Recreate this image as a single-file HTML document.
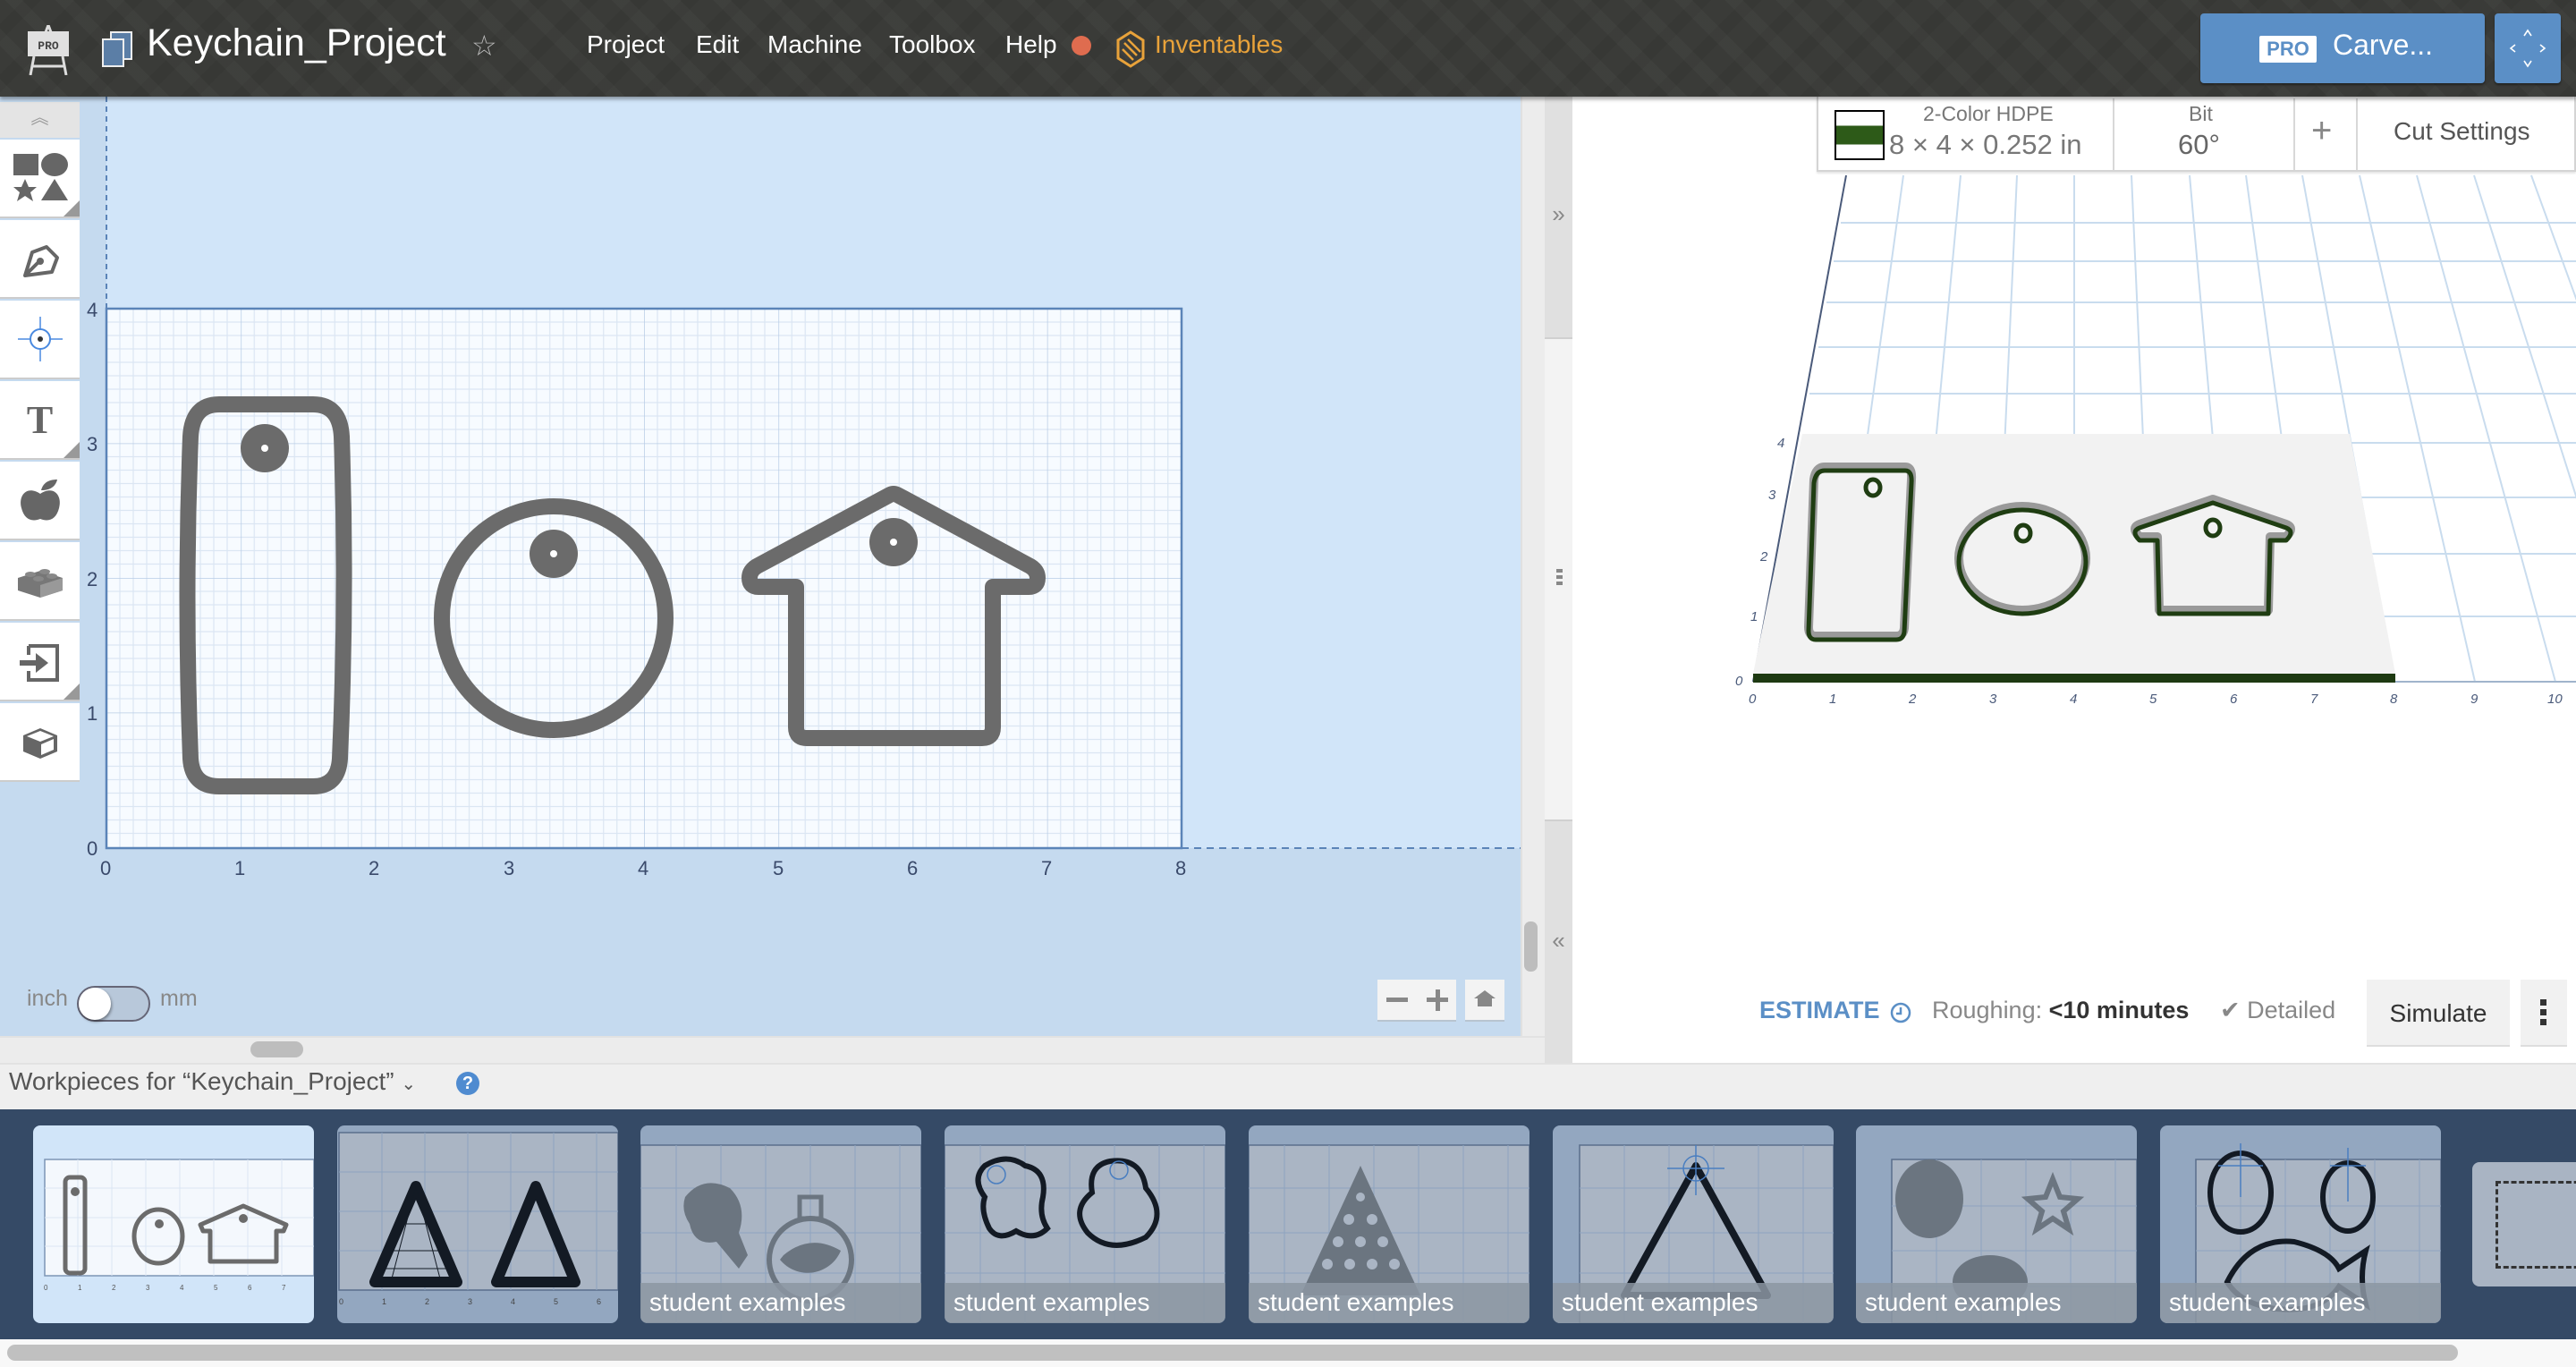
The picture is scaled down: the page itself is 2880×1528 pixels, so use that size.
<!DOCTYPE html>
<html><head><meta charset="utf-8">
<style>
*{margin:0;padding:0;box-sizing:border-box}
body{width:2880px;height:1528px;overflow:hidden;position:relative;font-family:"Liberation Sans",sans-serif;background:#fff}
.a{position:absolute}
.hdr{left:0;top:0;width:2880px;height:108px;background:#3a3b38;
background-image:repeating-linear-gradient(45deg,rgba(255,255,255,0.025) 0 14px,transparent 14px 40px),repeating-linear-gradient(-45deg,rgba(0,0,0,0.06) 0 14px,transparent 14px 40px);
box-shadow:0 3px 4px rgba(0,0,0,.35);z-index:5}
.menu{color:#fff;font-size:28px;top:34px}
.tb{left:0;width:89px;background:#fff;border-bottom:2px solid #ccc}
.tri{position:absolute;right:0;bottom:0;width:0;height:0;border-left:18px solid transparent;border-bottom:18px solid #999}
.card{top:1258px;width:314px;height:221px;border-radius:8px;overflow:hidden}
.cap{position:absolute;left:0;bottom:0;width:100%;height:45px;background:rgba(140,150,162,.85);color:#fff;font-size:28px;padding:6px 0 0 10px}
</style></head><body>

<div class="a hdr">
  <svg class="a" style="left:28px;top:28px" width="52" height="56" viewBox="0 0 52 56">
    <path d="M26 0 L23 8 M26 0 L29 8" stroke="#ddd" stroke-width="3"/>
    <rect x="3" y="7" width="46" height="28" fill="#e0e0e0"/>
    <text x="26" y="27" font-size="13" font-family="Liberation Mono" font-weight="bold" fill="#444" text-anchor="middle">PRO</text>
    <path d="M10 35 L6 56 M42 35 L46 56 M8 46 L44 46" stroke="#ddd" stroke-width="3"/>
  </svg>
  <svg class="a" style="left:113px;top:35px" width="36" height="40" viewBox="0 0 36 40">
    <rect x="11" y="1" width="23" height="30" fill="#5b7ea6" stroke="#eee" stroke-width="2"/>
    <rect x="2" y="9" width="23" height="30" fill="#5b7ea6" stroke="#eee" stroke-width="2"/>
  </svg>
  <div class="a" style="left:164px;top:24px;color:#fff;font-size:43px">Keychain_Project</div>
  <div class="a" style="left:527px;top:32px;color:#bbb;font-size:32px">☆</div>
  <div class="a menu" style="left:656px">Project</div>
  <div class="a menu" style="left:778px">Edit</div>
  <div class="a menu" style="left:858px">Machine</div>
  <div class="a menu" style="left:994px">Toolbox</div>
  <div class="a menu" style="left:1124px">Help</div>
  <div class="a" style="left:1198px;top:40px;width:22px;height:22px;border-radius:50%;background:#df6c4f"></div>
  <svg class="a" style="left:1247px;top:34px" width="34" height="42" viewBox="0 0 34 42">
    <path d="M17 2 L31 11 L31 31 L17 40 L3 31 L3 11 Z" fill="none" stroke="#e8a23a" stroke-width="3"/>
    <path d="M10 14 L24 28 M8 21 L20 33 M14 10 L28 24" stroke="#e8a23a" stroke-width="2.5"/>
  </svg>
  <div class="a menu" style="left:1291px;color:#e8a23a">Inventables</div>
  <div class="a" style="left:2460px;top:15px;width:318px;height:78px;background:#5b8fc6;border-radius:4px;box-shadow:0 2px 2px rgba(0,0,0,.4)"></div>
  <div class="a" style="left:2526px;top:40px;width:64px;height:30px;background:#fff;color:#5b8fc6;font-weight:bold;font-size:22px;text-align:center;line-height:30px;border-radius:2px">PRO</div>
  <div class="a" style="left:2608px;top:32px;color:#fff;font-size:32px">Carve...</div>
  <div class="a" style="left:2789px;top:15px;width:74px;height:78px;background:#5b8fc6;border-radius:4px;box-shadow:0 2px 2px rgba(0,0,0,.4)"></div>
  <svg class="a" style="left:2805px;top:32px" width="42" height="44" viewBox="0 0 42 44" fill="none" stroke="#fff" stroke-width="1.6">
    <path d="M17 8 L21 2 L25 8 M17 36 L21 42 L25 36 M7 18 L2 22 L7 26 M35 18 L40 22 L35 26"/>
  </svg>
</div>

<div class="a" style="left:0;top:108px;width:1700px;height:1050px;background:#c5daef"></div>
<div class="a" style="left:119px;top:108px;width:1581px;height:840px;background:#d1e5f9"></div>
<svg class="a" style="left:0;top:108px" width="1700" height="1050">
  <defs>
    <pattern id="g" x="119" y="237" width="150.25" height="150.5" patternUnits="userSpaceOnUse">
      <rect width="150.25" height="150.5" fill="#f7fbff"/>
      <g stroke="#dbe6f3" stroke-width="1.2">
        <path d="M15 0V151M30 0V151M45 0V151M60 0V151M75 0V151M90 0V151M105 0V151M120 0V151M135 0V151"/>
        <path d="M0 15H151M0 30H151M0 45H151M0 60H151M0 75H151M0 90H151M0 105H151M0 120H151M0 135H151"/>
      </g>
      <path d="M0 0V151M0 0H151" stroke="#b8cde6" stroke-width="1.5"/>
    </pattern>
  </defs>
  <rect x="119" y="237" width="1202" height="603" fill="url(#g)" stroke="#5b84b8" stroke-width="2.5"/>
  <path d="M119 0V237" stroke="#5b84b8" stroke-width="2" stroke-dasharray="6 5"/>
  <path d="M1321 840H1700" stroke="#5b84b8" stroke-width="2" stroke-dasharray="8 6"/>
  <g font-size="22" fill="#3a4a6b" font-family="Liberation Sans">
    <text x="112" y="870">0</text><text x="262" y="870">1</text><text x="412" y="870">2</text><text x="563" y="870">3</text><text x="713" y="870">4</text><text x="864" y="870">5</text><text x="1014" y="870">6</text><text x="1164" y="870">7</text><text x="1314" y="870">8</text>
    <text x="97" y="848">0</text><text x="97" y="697">1</text><text x="97" y="547">2</text><text x="97" y="396">3</text><text x="97" y="246">4</text>
  </g>
  <g fill="none" stroke="#6b6b6b" stroke-width="18" stroke-linejoin="round">
    <path d="M245 344 L350 344 Q380 344 382 380 Q388 560 380 740 Q378 771 350 771 L245 771 Q215 771 213 740 Q206 560 213 380 Q215 344 245 344 Z"/>
    <circle cx="619" cy="583" r="125"/>
    <path d="M890 548 L848 548 Q838 548 838 538 Q838 530 846 525 L995 445 Q999 443 1003 445 L1152 525 Q1160 530 1160 538 Q1160 548 1150 548 L1110 548 L1110 705 Q1110 717 1098 717 L902 717 Q890 717 890 705 Z"/>
  </g>
  <g fill="#6b6b6b"><circle cx="296" cy="393" r="27"/><circle cx="619" cy="511" r="27"/><circle cx="999" cy="498" r="27"/></g>
  <g fill="#fff"><circle cx="296" cy="393" r="4"/><circle cx="619" cy="511" r="4"/><circle cx="999" cy="498" r="4"/></g>
</svg>
<div class="a" style="left:0;top:114px;width:89px;height:40px;background:#e4e4e4;color:#999;text-align:center;font-size:20px;line-height:36px">︽</div>
<div class="a tb" style="top:156px;height:88px"><svg width="89" height="88"><rect x="15" y="16" width="28" height="24" fill="#666"/><ellipse cx="61" cy="28" rx="15" ry="13" fill="#666"/><path d="M28 44l4 9h9l-7 6 3 10-9-6-9 6 3-10-7-6h9z" fill="#666"/><path d="M61 44l15 24h-30z" fill="#666"/></svg><div class="tri"></div></div>
<div class="a tb" style="top:246px;height:88px"><svg width="89" height="88"><path d="M28 62 L36 36 L52 30 L64 42 L58 58 Z M28 62 L44 46" fill="none" stroke="#666" stroke-width="4" stroke-linejoin="round"/><circle cx="45" cy="46" r="4" fill="#666"/></svg></div>
<div class="a tb" style="top:336px;height:88px"><svg width="89" height="88"><circle cx="45" cy="43" r="11" fill="none" stroke="#4a8ae0" stroke-width="2"/><circle cx="45" cy="43" r="3" fill="#333"/><path d="M20 43H34M56 43H70M45 18V32M45 54V68" stroke="#4a8ae0" stroke-width="1.5"/></svg></div>
<div class="a tb" style="top:426px;height:88px"><div style="text-align:center;font-family:'Liberation Serif';font-weight:bold;font-size:44px;color:#666;line-height:88px">T</div><div class="tri"></div></div>
<div class="a tb" style="top:516px;height:88px"><svg width="89" height="88"><path d="M45 36 C30 26 20 38 24 52 C27 64 35 68 45 64 C55 68 63 64 66 52 C70 38 60 26 45 36Z" fill="#666"/><path d="M46 32 C48 24 54 20 64 20 C62 28 56 32 46 32Z" fill="#666"/></svg></div>
<div class="a tb" style="top:606px;height:88px"><svg width="89" height="88"><path d="M20 40 L45 32 L70 40 L70 54 L45 62 L20 54 Z" fill="#777"/><path d="M45 48 L70 40 L70 54 L45 62Z" fill="#999"/><ellipse cx="34" cy="36" rx="6" ry="3" fill="#888"/><ellipse cx="50" cy="33" rx="6" ry="3" fill="#888"/><ellipse cx="43" cy="41" rx="6" ry="3" fill="#888"/><ellipse cx="58" cy="38" rx="6" ry="3" fill="#888"/></svg></div>
<div class="a tb" style="top:696px;height:88px"><svg width="89" height="88"><path d="M32 26 H64 V64 H32 V54 M32 36 V26" fill="none" stroke="#666" stroke-width="4"/><path d="M22 42 H40 V34 L54 45 L40 56 V48 H22Z" fill="#666"/></svg><div class="tri"></div></div>
<div class="a tb" style="top:786px;height:88px"><svg width="89" height="88"><path d="M26 36 L45 28 L64 36 L64 54 L45 62 L26 54Z" fill="#666"/><path d="M30 37 L45 31 L60 37 L45 43Z M46 46 L60 40 L60 52 L46 58Z" fill="#fff"/></svg></div>

<div class="a" style="left:30px;top:1102px;color:#888;font-size:25px">inch</div>
<div class="a" style="left:86px;top:1102px;width:82px;height:40px;border-radius:20px;background:#b8c8da;border:2px solid #667"></div>
<div class="a" style="left:88px;top:1104px;width:36px;height:36px;border-radius:50%;background:#fff;box-shadow:1px 2px 3px rgba(0,0,0,.4)"></div>
<div class="a" style="left:179px;top:1102px;color:#888;font-size:25px">mm</div>
<div class="a" style="left:1540px;top:1095px;width:88px;height:47px;background:#f3f3f3;border-bottom:2px solid #b8c4d0"></div>
<div class="a" style="left:1550px;top:1115px;width:24px;height:5px;background:#888"></div>
<div class="a" style="left:1595px;top:1115px;width:24px;height:5px;background:#888"></div>
<div class="a" style="left:1605px;top:1106px;width:5px;height:24px;background:#888"></div>
<div class="a" style="left:1638px;top:1095px;width:44px;height:47px;background:#f3f3f3;border-bottom:2px solid #b8c4d0"></div>
<svg class="a" style="left:1646px;top:1105px" width="28" height="22"><path d="M2 11 L14 2 L26 11 Z M6 11 V20 H22 V11" fill="#888"/></svg>

<div class="a" style="left:1700px;top:108px;width:27px;height:1050px;background:#ececec;border-left:2px solid #e0e0e0"></div>
<div class="a" style="left:1704px;top:1030px;width:15px;height:56px;border-radius:7px;background:#bdbdbd"></div>
<div class="a" style="left:1727px;top:108px;width:31px;height:269px;background:#e0e0e0;color:#888;font-size:26px;text-align:center;padding-top:116px">»</div>
<div class="a" style="left:1727px;top:377px;width:31px;height:541px;background:#f3f3f3;border-top:2px solid #d0d0d0;border-bottom:2px solid #d0d0d0"></div>
<div class="a" style="left:1740px;top:636px;width:7px;height:20px;background:repeating-linear-gradient(#888 0 4px,transparent 4px 7px)"></div>
<div class="a" style="left:1727px;top:918px;width:31px;height:270px;background:#e0e0e0;color:#888;font-size:26px;text-align:center;padding-top:118px">«</div>
<div class="a" style="left:0;top:1158px;width:1727px;height:30px;background:#ececec;border-top:2px solid #e2e2e2"></div>
<div class="a" style="left:280px;top:1164px;width:59px;height:18px;border-radius:9px;background:#bdbdbd"></div>

<svg class="a" style="left:1758px;top:108px" width="1122" height="1080">
  <g transform="translate(-1758,-108)">
    <g stroke="#c9dcee" stroke-width="2" fill="none">
      <path d="M2058 249H2880M2050 292H2880M2042 338H2880M2033 388H2880M2023 440H2880M2013 495H2880M2003 556H2880M1991 619H2880M1979 689H2880"/>
      <path d="M2128 196L2050 762M2192 196L2139 762M2255 196L2229 762M2319 196L2319 762M2383 196L2408 762M2448 196L2498 762M2511 196L2588 762M2574 196L2677 762M2638 196L2767 762M2702 196L2857 762M2766 196L2946 762M2830 196L3036 762"/>
    </g>
    <path d="M2064 196L1960 762" stroke="#4a5a7a" stroke-width="2"/>
    <path d="M1960 762H2880" stroke="#a0b4cc" stroke-width="2"/>
    <path d="M2015 485H2627L2678 753H1960Z" fill="#f2f2f2"/>
    <rect x="1960" y="753" width="718" height="10" fill="#1e3a12"/>
    <g fill="none" stroke-linejoin="round">
      <g stroke="#9a9a9a" stroke-width="10" transform="translate(0,-4)">
        <path d="M2040 526H2130Q2138 526 2137 540L2129 706Q2128 715 2120 715H2030Q2022 715 2022 705L2028 540Q2030 526 2040 526Z"/>
        <ellipse cx="2261" cy="628" rx="71" ry="58"/>
        <path d="M2412 604H2392Q2382 594 2392 590L2474 562L2556 590Q2566 594 2556 604H2538L2536 686H2414Z"/>
      </g>
      <g stroke="#1f3d12" stroke-width="5">
        <path d="M2040 526H2130Q2138 526 2137 540L2129 706Q2128 715 2120 715H2030Q2022 715 2022 705L2028 540Q2030 526 2040 526Z"/>
        <ellipse cx="2261" cy="628" rx="71" ry="58"/>
        <path d="M2412 604H2392Q2382 594 2392 590L2474 562L2556 590Q2566 594 2556 604H2538L2536 686H2414Z"/>
        <ellipse cx="2094" cy="545" rx="8" ry="9"/><ellipse cx="2262" cy="596" rx="8" ry="9"/><ellipse cx="2474" cy="590" rx="8" ry="9"/>
      </g>
    </g>
    <g font-size="15" fill="#4a5a7a" font-style="italic">
      <text x="1955" y="786">0</text><text x="2045" y="786">1</text><text x="2134" y="786">2</text><text x="2224" y="786">3</text><text x="2314" y="786">4</text><text x="2403" y="786">5</text><text x="2493" y="786">6</text><text x="2583" y="786">7</text><text x="2672" y="786">8</text><text x="2762" y="786">9</text><text x="2848" y="786">10</text>
      <text x="1940" y="766">0</text><text x="1957" y="694">1</text><text x="1968" y="627">2</text><text x="1977" y="558">3</text><text x="1987" y="500">4</text>
    </g>
  </g>
</svg>
<div class="a" style="left:2031px;top:108px;width:849px;height:84px;background:#fff;border:2px solid #d4d4d4;border-top:none;box-shadow:0 2px 2px rgba(0,0,0,.1)"></div>
<div class="a" style="left:2051px;top:123px;width:56px;height:56px;border:2px solid #000;background:linear-gradient(#fff 0 30%,#2d5a18 30% 70%,#fff 70%)"></div>
<div class="a" style="left:2150px;top:114px;color:#777;font-size:23px">2-Color HDPE</div>
<div class="a" style="left:2112px;top:144px;color:#777;font-size:31px">8 × 4 × 0.252 in</div>
<div class="a" style="left:2362px;top:110px;width:2px;height:80px;background:#d8d8d8"></div>
<div class="a" style="left:2447px;top:114px;color:#777;font-size:23px">Bit</div>
<div class="a" style="left:2435px;top:144px;color:#666;font-size:31px">60°</div>
<div class="a" style="left:2564px;top:110px;width:2px;height:80px;background:#d8d8d8"></div>
<div class="a" style="left:2584px;top:124px;color:#888;font-size:40px">+</div>
<div class="a" style="left:2634px;top:110px;width:2px;height:80px;background:#d8d8d8"></div>
<div class="a" style="left:2676px;top:131px;color:#555;font-size:28px">Cut Settings</div>

<div class="a" style="left:1967px;top:1114px;color:#5b8fc6;font-size:27px;font-weight:bold">ESTIMATE</div>
<svg class="a" style="left:2112px;top:1119px" width="26" height="26"><circle cx="13" cy="13" r="10" fill="none" stroke="#5b8fc6" stroke-width="2.5"/><path d="M13 7V14H8" fill="none" stroke="#5b8fc6" stroke-width="2.5"/></svg>
<div class="a" style="left:2160px;top:1114px;color:#888;font-size:27px">Roughing: <b style="color:#333">&lt;10 minutes</b></div>
<div class="a" style="left:2482px;top:1114px;color:#888;font-size:27px">✔ Detailed</div>
<div class="a" style="left:2646px;top:1095px;width:160px;height:75px;background:#f1f1f1;border-bottom:2px solid #ddd;color:#333;font-size:28px;text-align:center;line-height:75px">Simulate</div>
<div class="a" style="left:2818px;top:1095px;width:52px;height:75px;background:#f1f1f1;border-bottom:2px solid #ddd"></div>
<div class="a" style="left:2840px;top:1117px;width:7px;height:30px;background:repeating-linear-gradient(#333 0 7px,transparent 7px 11px)"></div>

<div class="a" style="left:0;top:1188px;width:2880px;height:52px;background:#efefef;border-top:2px solid #e2e2e2"></div>
<div class="a" style="left:10px;top:1193px;color:#555;font-size:28px">Workpieces for “Keychain_Project” <span style="font-size:20px">⌄</span></div>
<div class="a" style="left:510px;top:1198px;width:26px;height:26px;border-radius:50%;background:#4f8bd0;color:#fff;font-weight:bold;font-size:20px;text-align:center;line-height:26px">?</div>
<div class="a" style="left:0;top:1240px;width:2880px;height:257px;background:#354a66"></div>

<div class="a card" style="left:37px;background:#d1e5f9">
<svg width="314" height="221"><rect x="13" y="38" width="301" height="130" fill="#f4f8fd" stroke="#7d95b5" stroke-width="1.5"/>
<g stroke="#dbe6f3"><path d="M50 38V168M88 38V168M126 38V168M164 38V168M202 38V168M240 38V168M278 38V168M13 70H314M13 103H314M13 135H314"/></g>
<g fill="none" stroke="#6b6b6b" stroke-width="5" stroke-linejoin="round"><rect x="36" y="58" width="22" height="107" rx="5"/><ellipse cx="140" cy="124" rx="27" ry="30"/><path d="M198 118H190L187 111L235 90L283 111L280 118H272V152H198V118Z"/></g>
<g fill="#6b6b6b"><circle cx="47" cy="74" r="5"/><circle cx="141" cy="110" r="5"/><circle cx="235" cy="104" r="5"/></g>
<g font-size="8" fill="#555"><text x="12" y="184">0</text><text x="50" y="184">1</text><text x="88" y="184">2</text><text x="126" y="184">3</text><text x="164" y="184">4</text><text x="202" y="184">5</text><text x="240" y="184">6</text><text x="278" y="184">7</text></g></svg></div>

<div class="a card" style="left:377px;background:#93a7c0">
<svg width="314" height="221"><rect x="2" y="8" width="312" height="176" fill="#aab5c4" stroke="#5a6f8c" stroke-width="1.5"/>
<g stroke="#8ea4bf"><path d="M50 8V184M98 8V184M146 8V184M194 8V184M242 8V184M290 8V184M2 52H314M2 96H314M2 140H314"/></g>
<path d="M88 68L42 175H134Z" fill="#aab5c4" stroke="#131a24" stroke-width="12" stroke-linejoin="round"/>
<g stroke="#131a24" stroke-width="1"><path d="M88 68L60 175M88 68L116 175M55 140H120M65 110H110M48 160H128"/></g>
<path d="M222 68L178 175H266Z" fill="none" stroke="#131a24" stroke-width="12" stroke-linejoin="round"/>
<g font-size="9" fill="#444"><text x="2" y="200">0</text><text x="50" y="200">1</text><text x="98" y="200">2</text><text x="146" y="200">3</text><text x="194" y="200">4</text><text x="242" y="200">5</text><text x="290" y="200">6</text></g></svg></div>

<div class="a card" style="left:716px;background:#93a7c0">
<svg width="314" height="221"><rect x="0" y="22" width="314" height="199" fill="#aab5c4" stroke="#5a6f8c" stroke-width="1.5"/>
<g stroke="#8ea4bf"><path d="M40 22V221M90 22V221M140 22V221M190 22V221M240 22V221M290 22V221M0 70H314M0 120H314M0 165H314"/></g>
<path d="M50 80Q70 55 100 70Q120 90 110 120L120 145L110 160L85 130Q60 135 55 110Q45 95 50 80Z" fill="#6b7580"/>
<circle cx="190" cy="150" r="46" fill="none" stroke="#6b7580" stroke-width="6"/>
<path d="M160 145Q190 120 224 140A40 40 0 0 1 156 150Z" fill="#6b7580"/>
<path d="M178 80H202V104H178Z" fill="none" stroke="#6b7580" stroke-width="5"/></svg>
<div class="cap">student examples</div></div>

<div class="a card" style="left:1056px;background:#93a7c0">
<svg width="314" height="221"><rect x="0" y="22" width="314" height="199" fill="#aab5c4" stroke="#5a6f8c" stroke-width="1.5"/>
<g stroke="#8ea4bf"><path d="M40 22V221M90 22V221M140 22V221M190 22V221M240 22V221M290 22V221M0 70H314M0 120H314M0 165H314"/></g>
<path d="M45 45Q70 30 90 45Q115 50 110 80Q105 100 115 115Q100 130 80 118Q60 130 50 115Q40 95 45 80Q30 60 45 45Z" fill="none" stroke="#131a24" stroke-width="6"/>
<path d="M185 40Q220 35 225 70Q250 100 225 125Q185 145 160 120Q140 95 165 75Q160 45 185 40Z" fill="none" stroke="#131a24" stroke-width="6"/>
<circle cx="58" cy="55" r="10" fill="none" stroke="#4a7ec0" stroke-width="1.5"/><circle cx="195" cy="50" r="10" fill="none" stroke="#4a7ec0" stroke-width="1.5"/></svg>
<div class="cap">student examples</div></div>

<div class="a card" style="left:1396px;background:#93a7c0">
<svg width="314" height="221"><rect x="0" y="22" width="314" height="199" fill="#aab5c4" stroke="#5a6f8c" stroke-width="1.5"/>
<g stroke="#8ea4bf"><path d="M40 22V221M90 22V221M140 22V221M190 22V221M240 22V221M290 22V221M0 70H314M0 120H314M0 165H314"/></g>
<path d="M125 45L58 190H192Z" fill="#6b7580"/>
<g fill="#aab5c4"><circle cx="125" cy="80" r="5"/><circle cx="112" cy="105" r="6"/><circle cx="138" cy="105" r="6"/><circle cx="100" cy="130" r="6"/><circle cx="125" cy="130" r="6"/><circle cx="150" cy="130" r="6"/><circle cx="88" cy="155" r="6"/><circle cx="113" cy="155" r="6"/><circle cx="138" cy="155" r="6"/><circle cx="163" cy="155" r="6"/></g></svg>
<div class="cap">student examples</div></div>

<div class="a card" style="left:1736px;background:#93a7c0">
<svg width="314" height="221"><rect x="30" y="22" width="284" height="199" fill="#aab5c4" stroke="#5a6f8c" stroke-width="1.5"/>
<g stroke="#8ea4bf"><path d="M80 22V221M130 22V221M180 22V221M230 22V221M280 22V221M30 70H314M30 120H314M30 165H314"/></g>
<path d="M160 45L80 190H240Z" fill="none" stroke="#131a24" stroke-width="8" stroke-linejoin="round"/>
<circle cx="160" cy="48" r="14" fill="none" stroke="#4a7ec0" stroke-width="1.5"/><path d="M160 22V78M128 48H192" stroke="#4a7ec0" stroke-width="1.5"/></svg>
<div class="cap">student examples</div></div>

<div class="a card" style="left:2075px;background:#93a7c0">
<svg width="314" height="221"><rect x="40" y="38" width="274" height="183" fill="#aab5c4" stroke="#5a6f8c" stroke-width="1.5"/>
<g stroke="#8ea4bf"><path d="M90 38V221M140 38V221M190 38V221M240 38V221M290 38V221M40 90H314M40 140H314M40 180H314"/></g>
<ellipse cx="82" cy="82" rx="38" ry="44" fill="#6b7580"/>
<path d="M220 60L228 80L248 82L232 96L238 116L220 104L202 116L208 96L192 82L212 80Z" fill="none" stroke="#6b7580" stroke-width="6"/>
<ellipse cx="150" cy="175" rx="42" ry="30" fill="#6b7580"/></svg>
<div class="cap">student examples</div></div>

<div class="a card" style="left:2415px;background:#93a7c0">
<svg width="314" height="221"><rect x="40" y="38" width="274" height="183" fill="#aab5c4" stroke="#5a6f8c" stroke-width="1.5"/>
<g stroke="#8ea4bf"><path d="M90 38V221M140 38V221M190 38V221M240 38V221M290 38V221M40 90H314M40 140H314M40 180H314"/></g>
<g fill="none" stroke="#131a24" stroke-width="6"><ellipse cx="90" cy="75" rx="34" ry="44"/><ellipse cx="210" cy="80" rx="28" ry="38"/><path d="M75 175Q100 125 150 130Q190 140 200 160L230 140Q222 170 230 200L200 180Q180 210 130 205Q90 200 75 175Z"/></g>
<g stroke="#4a7ec0" stroke-width="1.5"><path d="M90 20V80M65 45H115M210 25V85M190 45H230"/></g></svg>
<div class="cap">student examples</div></div>

<div class="a" style="left:2764px;top:1299px;width:140px;height:139px;background:#a9b4c3;border-radius:8px"></div>
<div class="a" style="left:2790px;top:1320px;width:120px;height:98px;border:3px dashed #333"></div>

<div class="a" style="left:0;top:1497px;width:2880px;height:31px;background:#f8f8f8"></div>
<div class="a" style="left:8px;top:1503px;width:2740px;height:18px;border-radius:9px;background:#c0c0c0"></div>
</body></html>
